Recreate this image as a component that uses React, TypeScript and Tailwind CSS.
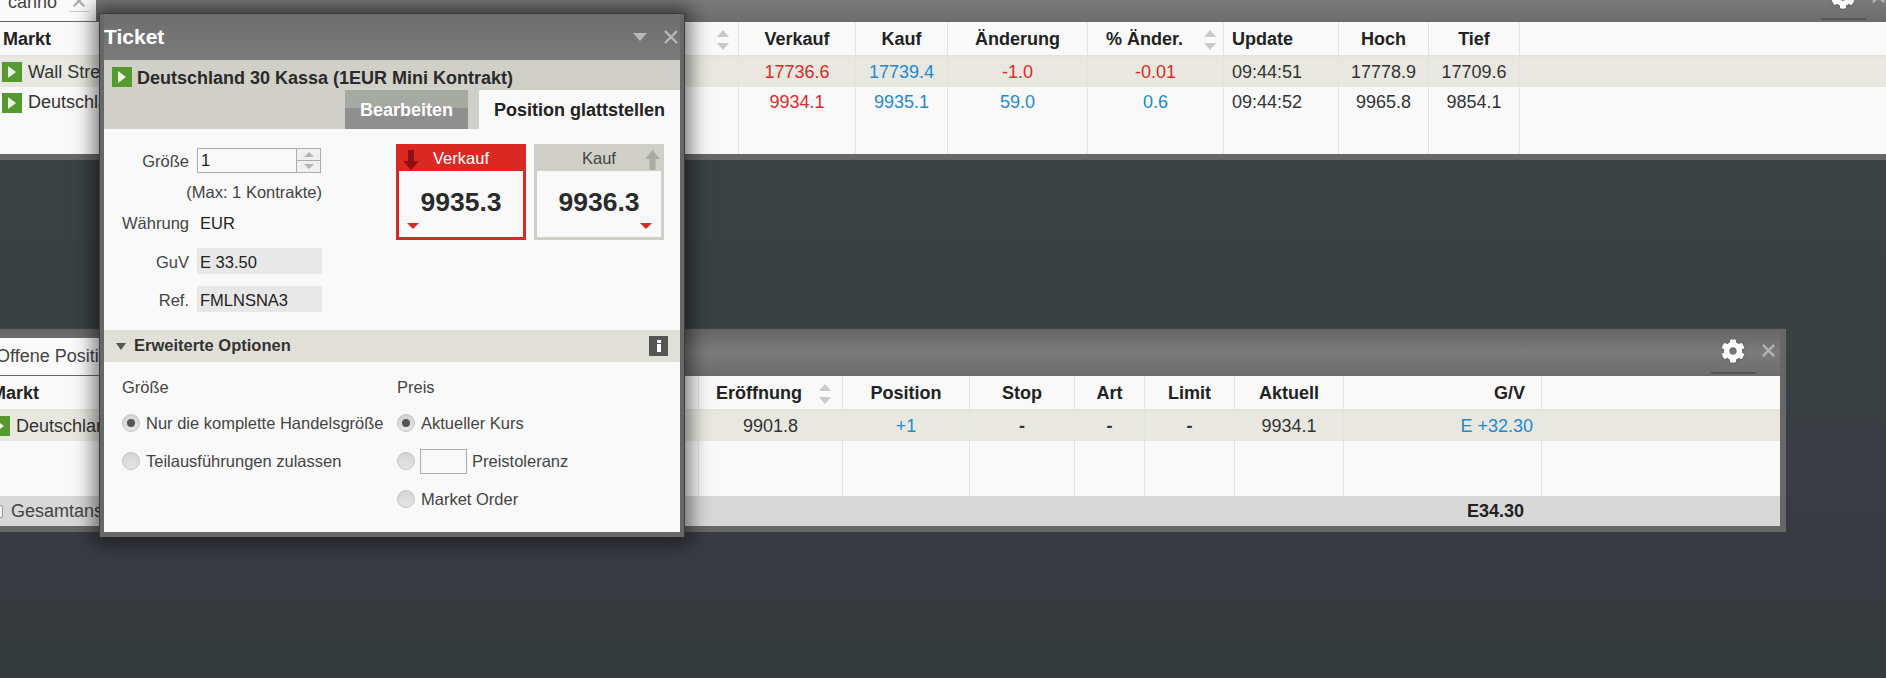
import React from 'react';
import { FaCog } from 'react-icons/fa';

const lineCell = 'border-r border-[#e3e3e3] flex items-center';
const headCell = 'border-r border-[#e3e3e3] border-b-2 border-b-[#e4e4dc] flex items-center justify-center pt-[2px] font-bold text-[#222]';
const red = 'text-[#dc2a2a]';
const blue = 'text-[#1f8ad2]';

const CloseGlyph = ({ size, className }: { size: number; className?: string }) => (
  <svg width={size} height={size} viewBox="0 0 16 16" className={className}>
    <path d="M2 2 L14 14 M14 2 L2 14" stroke="currentColor" strokeWidth="2.4" />
  </svg>
);

const PlayIcon = ({ className = '' }: { className?: string }) => (
  <span className={`flex h-5 w-5 shrink-0 items-center justify-center bg-[#559a2f] ${className}`}>
    <svg width="8" height="12" viewBox="0 0 8 12">
      <path d="M0 0 L8 6 L0 12 Z" fill="#eef2e2" />
    </svg>
  </span>
);

const SortArrows = () => (
  <svg width="14" height="20" viewBox="0 0 14 20" className="shrink-0">
    <path d="M7 0 L13 7 L1 7 Z" fill="#c9c9c9" />
    <path d="M1 13 L13 13 L7 20 Z" fill="#c9c9c9" />
  </svg>
);

const Triangle = ({ className }: { className: string }) => (
  <svg width="12" height="6" viewBox="0 0 12 6" className={className}>
    <path d="M0 0 L12 0 L6 6 Z" fill="currentColor" />
  </svg>
);

// gemeinsamer Rahmen fuer Kursliste und offene Positionen
const TradeWindow = ({ title, className, children }: { title: string; className: string; children: React.ReactNode }) => (
  <div className={`absolute flex flex-col border-t border-[#444] bg-[#676767] pr-[6px] pb-[6px] ${className}`}>
    <div className="flex h-[47px] shrink-0 items-start justify-between bg-gradient-to-b from-[#666] via-[#7b7b7b] to-[#6c6c6c]">
      <div className="mt-[9px] flex h-[38px] items-center gap-3 border-b border-[#666] bg-[#fafafa] pl-2 pr-[7px] text-[#444]">
        <span>{title}</span>
        <span className="flex h-[18px] w-5 items-start justify-center border-b border-[#ccc] text-[#aaa]">
          <CloseGlyph size={14} />
        </span>
      </div>
      <div className="relative mr-[4px] mt-[10px] flex items-start gap-[16px]">
        <FaCog size={24} className="text-white drop-shadow" />
        <CloseGlyph size={15} className="mt-1 text-[#b4b4b4]" />
        <span className="absolute left-[-10px] top-[33px] h-[2px] w-[45px] bg-[#555]" />
      </div>
    </div>
    {children}
  </div>
);

const Radio = ({ checked = false }: { checked?: boolean }) => (
  <span className="flex h-[18px] w-[18px] shrink-0 items-center justify-center rounded-full border border-[#c4c4c4] bg-gradient-to-b from-[#d4d4d4] to-[#e4e4e4]">
    {checked && <span className="h-2 w-2 rounded-full bg-[#555]" />}
  </span>
);

const PriceBox = ({ label, price, active }: { label: string; price: string; active?: boolean }) => (
  <div className={`relative flex h-24 w-[130px] flex-col border-[3px] border-t-0 ${active ? 'border-[#dc2823]' : 'border-[#d0d0c8]'}`}>
    <div className={`flex h-[27px] shrink-0 items-center justify-center pt-[2px] text-[16.5px] ${active ? 'bg-[#dc2823] text-white' : 'bg-[#d0d0c8] text-[#444]'}`}>
      {label}
    </div>
    <div className="flex h-[63px] items-center justify-center bg-[#f9f9f9] text-[26.5px] font-bold text-[#2a2a2a]">{price}</div>
    {active ? (
      <svg width="16" height="20" viewBox="0 0 16 20" className="absolute left-[4px] top-[6px]">
        <path d="M5 0 H11 V11 H16 L8 20 L0 11 H5 Z" fill="#8e1010" />
      </svg>
    ) : (
      <svg width="15" height="20" viewBox="0 0 15 20" className="absolute right-[1px] top-[6px]">
        <path d="M7.5 0 L15 9 H10.5 V20 H4.5 V9 H0 Z" fill="#aaaaa6" />
      </svg>
    )}
    <Triangle className={`absolute top-[79px] text-[#dc2823] ${active ? 'left-[8px]' : 'right-[9px]'}`} />
  </div>
);

const Ticket = () => (
  <div className="absolute left-[99px] top-[13px] flex h-[524px] w-[586px] flex-col border-t border-x border-[#3c3c3c] bg-[#676767] px-[4px] pb-[5px] shadow-[0_0_18px_6px_rgba(0,0,0,0.5)]">
    <div className="flex h-[46px] shrink-0 items-center justify-between bg-gradient-to-b from-[#6e6e6e] to-[#7a7a7a] pr-px">
      <span className="text-[21px] font-bold text-white [text-shadow:0_0_2px_#888]">Ticket</span>
      <div className="flex items-center gap-4 text-[#b8b8b8]">
        <svg width="14" height="8" viewBox="0 0 14 8"><path d="M0 0 L14 0 L7 8 Z" fill="currentColor" /></svg>
        <CloseGlyph size={16} />
      </div>
    </div>

    <div className="flex h-[69px] shrink-0 flex-col bg-[#d0d0c8]">
      <div className="flex h-[30px] items-start gap-[5px] pl-2 pt-[7px] font-bold text-[#2a2a2a]">
        <PlayIcon />
        <span className="pt-px text-[18px] leading-5">Deutschland 30 Kassa (1EUR Mini Kontrakt)</span>
      </div>
      <div className="flex h-[39px] justify-end gap-[11px] font-bold">
        <div className="flex w-[123px] items-center justify-center bg-[linear-gradient(#a5aba3_45%,#8f8f8f_45%)] pt-[2px] text-white">Bearbeiten</div>
        <div className="flex w-[201px] items-center justify-center bg-[#f9f9f9] pt-[2px] text-[#222]">Position glattstellen</div>
      </div>
    </div>

    <div className="flex h-[201px] shrink-0 gap-[74px] bg-[#f9f9f9] text-[16.5px] text-[#444]">
      <div className="flex w-[218px] flex-col pt-[19px]">
        <div className="flex h-[25px] items-center">
          <span className="w-[85px] pt-[2px] text-right">Größe</span>
          <div className="ml-2 flex h-[25px] w-[124px] border border-[#aab0a8] bg-[#f9f9f9]">
            <span className="flex-1 pl-[3px] leading-[22px] text-[#222]">1</span>
            <div className="flex w-6 flex-col border-l border-[#aab0a8]">
              <span className="flex flex-1 items-center justify-center border-b border-[#aab0a8] bg-[#f0f0f0]">
                <svg width="10" height="5" viewBox="0 0 10 5"><path d="M5 0 L10 5 L0 5 Z" fill="#b4b4b4" /></svg>
              </span>
              <span className="flex flex-1 items-center justify-center bg-[#f0f0f0]">
                <svg width="10" height="5" viewBox="0 0 10 5"><path d="M0 0 L10 0 L5 5 Z" fill="#b4b4b4" /></svg>
              </span>
            </div>
          </div>
        </div>
        <div className="mt-[6px] flex h-[25px] items-center justify-end whitespace-nowrap pt-[2px]">(Max: 1 Kontrakte)</div>
        <div className="mt-[5px] flex h-[26px] items-center pt-[2px]">
          <span className="w-[85px] text-right">Währung</span>
          <span className="ml-[11px] text-[#222]">EUR</span>
        </div>
        <div className="mt-[13px] flex h-[26px] items-center">
          <span className="w-[85px] pt-[2px] text-right">GuV</span>
          <span className="ml-2 flex h-[26px] w-[125px] items-center bg-[#e8e8e8] pl-[3px] pt-[3px] text-[#222]">E 33.50</span>
        </div>
        <div className="mt-[12px] flex h-[26px] items-center">
          <span className="w-[85px] pt-[2px] text-right">Ref.</span>
          <span className="ml-2 flex h-[26px] w-[125px] items-center bg-[#e8e8e8] pl-[3px] pt-[2px] text-[#222]">FMLNSNA3</span>
        </div>
      </div>
      <div className="flex gap-2 pt-[15px]">
        <PriceBox label="Verkauf" price="9935.3" active />
        <PriceBox label="Kauf" price="9936.3" />
      </div>
    </div>

    <div className="flex h-8 shrink-0 items-center bg-[#e0e0d8] pl-3 pr-3">
      <svg width="10" height="7" viewBox="0 0 10 7"><path d="M0 0 L10 0 L5 7 Z" fill="#555" /></svg>
      <span className="ml-2 pb-px text-[16.5px] font-bold text-[#333]">Erweiterte Optionen</span>
      <span className="ml-auto flex h-5 w-[19px] flex-col items-center justify-center gap-px bg-[#555]">
        <span className="h-[3px] w-1 bg-white" />
        <span className="h-2 w-1 bg-white" />
      </span>
    </div>

    <div className="flex flex-1 bg-[#f9f9f9] pl-[18px] pt-[15px] text-[16.5px] text-[#444]">
      <div className="flex w-[275px] flex-col">
        <div className="mb-[7px] h-5 leading-5">Größe</div>
        <div className="flex h-[38px] items-center gap-[6px] whitespace-nowrap"><Radio checked /> Nur die komplette Handelsgröße</div>
        <div className="flex h-[38px] items-center gap-[6px] whitespace-nowrap"><Radio /> Teilausführungen zulassen</div>
      </div>
      <div className="flex flex-col">
        <div className="mb-[7px] h-5 leading-5">Preis</div>
        <div className="flex h-[38px] items-center gap-[6px]"><Radio checked /> Aktueller Kurs</div>
        <div className="flex h-[38px] items-center gap-[5px]">
          <Radio />
          <span className="h-[25px] w-[47px] border border-[#aab0a8]" />
          <span>Preistoleranz</span>
        </div>
        <div className="flex h-[38px] items-center gap-[6px]"><Radio /> Market Order</div>
      </div>
    </div>
  </div>
);

const MarketsTable = () => (
  <div className="grid flex-1 grid-cols-[739px_117px_92px_140px_136px_115px_90px_91px_1fr] grid-rows-[35px_30px_31px_1fr] bg-[#f9f9f9] text-[#333]">
    <div className={`${headCell} !justify-between pl-[3px] pr-[8px]`}><span>Markt</span><SortArrows /></div>
    <div className={headCell}>Verkauf</div>
    <div className={headCell}>Kauf</div>
    <div className={headCell}>Änderung</div>
    <div className={`${headCell} !justify-between pl-[18px] pr-[6px]`}><span>% Änder.</span><SortArrows /></div>
    <div className={`${headCell} !justify-start pl-[8px]`}>Update</div>
    <div className={headCell}>Hoch</div>
    <div className={headCell}>Tief</div>
    <div className="border-b-2 border-[#e4e4dc]" />

    <div className={`${lineCell} gap-[6px] bg-[#e8e8e0] pl-[2px]`}><PlayIcon />Wall Street 30 Kassa</div>
    <div className={`${lineCell} justify-center bg-[#e8e8e0] ${red}`}>17736.6</div>
    <div className={`${lineCell} justify-center bg-[#e8e8e0] ${blue}`}>17739.4</div>
    <div className={`${lineCell} justify-center bg-[#e8e8e0] ${red}`}>-1.0</div>
    <div className={`${lineCell} justify-center bg-[#e8e8e0] ${red}`}>-0.01</div>
    <div className={`${lineCell} bg-[#e8e8e0] pl-[8px]`}>09:44:51</div>
    <div className={`${lineCell} justify-center bg-[#e8e8e0]`}>17778.9</div>
    <div className={`${lineCell} justify-center bg-[#e8e8e0]`}>17709.6</div>
    <div className="bg-[#e8e8e0]" />

    <div className={`${lineCell} gap-[6px] pl-[2px]`}><PlayIcon />Deutschland 30 Kassa</div>
    <div className={`${lineCell} justify-center ${red}`}>9934.1</div>
    <div className={`${lineCell} justify-center ${blue}`}>9935.1</div>
    <div className={`${lineCell} justify-center ${blue}`}>59.0</div>
    <div className={`${lineCell} justify-center ${blue}`}>0.6</div>
    <div className={`${lineCell} pl-[8px]`}>09:44:52</div>
    <div className={`${lineCell} justify-center`}>9965.8</div>
    <div className={`${lineCell} justify-center`}>9854.1</div>
    <div />

    <div className={lineCell} /><div className={lineCell} /><div className={lineCell} /><div className={lineCell} />
    <div className={lineCell} /><div className={lineCell} /><div className={lineCell} /><div className={lineCell} />
    <div />
  </div>
);

const PositionsTable = () => (
  <div className="grid flex-1 grid-cols-[711px_144px_127px_105px_70px_90px_109px_198px_1fr] grid-rows-[35px_30px_1fr_30px] bg-[#f9f9f9] text-[#333]">
    <div className={`${headCell} !justify-start pl-[3px]`}>Markt</div>
    <div className={`${headCell} !justify-between pl-[17px] pr-[10px]`}><span>Eröffnung</span><SortArrows /></div>
    <div className={headCell}>Position</div>
    <div className={headCell}>Stop</div>
    <div className={headCell}>Art</div>
    <div className={headCell}>Limit</div>
    <div className={headCell}>Aktuell</div>
    <div className={`${headCell} !justify-end pr-4`}>G/V</div>
    <div className="border-b-2 border-[#e4e4dc]" />

    <div className={`${lineCell} gap-[6px] bg-[#e8e8e0] pl-[2px]`}><PlayIcon />Deutschland 30 Kassa</div>
    <div className={`${lineCell} justify-center bg-[#e8e8e0]`}>9901.8</div>
    <div className={`${lineCell} justify-center bg-[#e8e8e0] ${blue}`}>+1</div>
    <div className={`${lineCell} justify-center bg-[#e8e8e0] font-bold`}>-</div>
    <div className={`${lineCell} justify-center bg-[#e8e8e0] font-bold`}>-</div>
    <div className={`${lineCell} justify-center bg-[#e8e8e0] font-bold`}>-</div>
    <div className={`${lineCell} justify-center bg-[#e8e8e0]`}>9934.1</div>
    <div className={`${lineCell} justify-end bg-[#e8e8e0] pr-2 ${blue}`}>E +32.30</div>
    <div className="bg-[#e8e8e0]" />

    <div className={lineCell} /><div className={lineCell} /><div className={lineCell} /><div className={lineCell} />
    <div className={lineCell} /><div className={lineCell} /><div className={lineCell} /><div className={lineCell} />
    <div />

    <div className="col-span-7 flex items-center gap-2 bg-[#d8d8d8] pl-[2px] text-[#444]">
      <span className="h-[13px] w-[13px] rounded-[2px] border border-[#999] bg-[#f0f0f0]" />
      Gesamtansicht
    </div>
    <div className="flex items-center justify-end bg-[#d8d8d8] pr-[18px] font-bold text-[#222]">E34.30</div>
    <div className="bg-[#d8d8d8]" />
  </div>
);

export default function App() {
  return (
    <div className="relative h-[678px] w-[1886px] overflow-hidden bg-[linear-gradient(#3b4243_0%,#3a4142_50%,#393b43_78%,#343a3a_100%)] font-['Liberation_Sans',Arial,sans-serif] text-[18px]">
      <TradeWindow title="canno" className="left-0 top-[-26px] h-[186px] w-[1896px]">
        <MarketsTable />
      </TradeWindow>
      <TradeWindow title="Offene Positionen" className="left-[-12px] top-[328px] h-[204px] w-[1798px]">
        <PositionsTable />
      </TradeWindow>
      <Ticket />
    </div>
  );
}
